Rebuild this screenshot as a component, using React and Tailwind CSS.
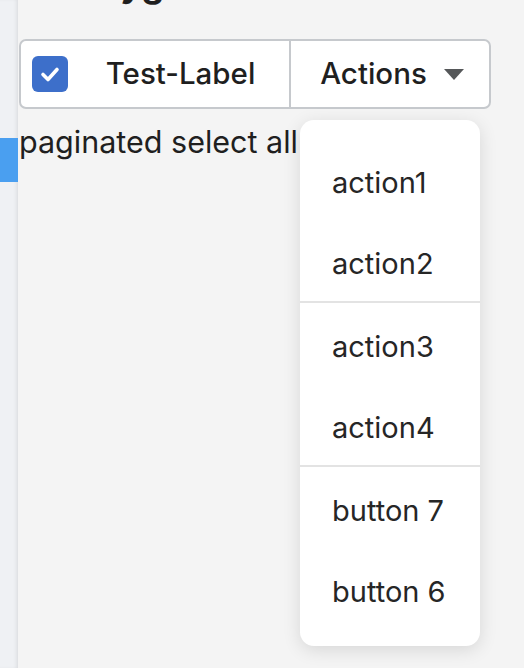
import { useState } from "react";

const menuGroups = [
  ["action1", "action2"],
  ["action3", "action4"],
  ["button 7", "button 6"],
];

const Caret = () => (
  <svg width="20" height="11" viewBox="0 0 20 11" className="shrink-0">
    <path d="M0 0 L20 0 L10 11 Z" fill="#555759" />
  </svg>
);

const Check = () => (
  <svg width="26" height="26" viewBox="0 0 26 26">
    <path
      d="M6 13.5 L11 18.5 L20 8.5"
      fill="none"
      stroke="#fff"
      strokeWidth="3.6"
      strokeLinecap="round"
      strokeLinejoin="round"
    />
  </svg>
);

export default function App() {
  const [checked, setChecked] = useState(true);

  return (
    <div
      className="flex min-h-screen bg-[#f4f4f4] text-[#1f1f1f]"
      style={{ fontFamily: "Inter, 'Noto Sans', sans-serif" }}
    >
      {/* sidebar strip */}
      <aside className="w-[18px] shrink-0 bg-[#eff1f4] shadow-[inset_-3px_0_4px_-2px_rgba(0,0,0,0.10)]">
        <div className="mt-[138px] h-[44px] w-full bg-[#4a9ff0]" />
      </aside>

      <main className="relative flex-1 overflow-hidden pl-[1px]">
        <h1 className="-mt-[38px] h-[77px] pl-[48px] text-[36px] font-bold leading-[44px] text-[#1f1f1f]">
          Playground
        </h1>

        {/* button group */}
        <div className="flex h-[70px] w-[472px] rounded-[7px] border-2 border-[#c6c9cd] bg-white">
          <label className="flex w-[268px] items-center pl-[11px]">
            <button
              onClick={() => setChecked(!checked)}
              className="flex h-[36px] w-[36px] items-center justify-center rounded-[6px] bg-[#3d6fca]"
            >
              {checked && <Check />}
            </button>
            <span className="flex-1 pl-[4px] text-center text-[29.5px] font-medium leading-none">
              Test-Label
            </span>
          </label>
          <div className="w-[2px] bg-[#c6c9cd]" />
          <button className="flex flex-1 items-center justify-center gap-[17px] pl-[4px]">
            <span className="text-[29.5px] font-medium leading-none">Actions</span>
            <Caret />
          </button>
        </div>

        <p className="mt-[13px] text-[30.5px] leading-[40px] text-[#1f1f1f]">
          paginated select all
        </p>

        {/* dropdown menu */}
        <div className="absolute left-[282px] top-[120px] w-[180px] overflow-hidden rounded-[14px] bg-white shadow-[0_4px_18px_rgba(0,0,0,0.12)]">
          {menuGroups.map((group, i) => (
            <div
              key={i}
              className={
                i === 0
                  ? "pt-[19px]"
                  : i === 2
                  ? "border-t-2 border-[#e3e3e3] pb-[17px]"
                  : "border-t-2 border-[#e3e3e3]"
              }
            >
              {group.map((item) => (
                <div
                  key={item}
                  className="flex h-[81px] items-center pl-[32px] pt-[6px] text-[29px] text-[#262626]"
                >
                  {item}
                </div>
              ))}
            </div>
          ))}
        </div>
      </main>
    </div>
  );
}
